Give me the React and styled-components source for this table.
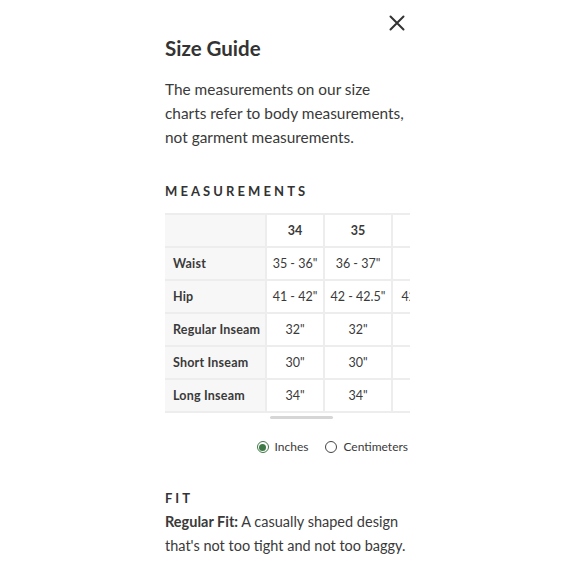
import React from "react";
import styled, { createGlobalStyle } from "styled-components";

const Global = createGlobalStyle`
  html, body { margin: 0; padding: 0; background: #fff; }
  body { font-family: Lato, "Noto Sans", sans-serif; color: #333; }
`;

const Page = styled.div`
  width: 580px;
  height: 580px;
  overflow: hidden;
  padding-left: 165px;
  box-sizing: border-box;
`;

const Panel = styled.div`
  width: 245px;
  display: flex;
  flex-direction: column;
  position: relative;
`;

const Close = styled.button`
  position: absolute;
  top: 15px;
  right: 5px;
  width: 16px;
  height: 16px;
  padding: 0;
  border: 0;
  background: none;
  display: flex;
`;

const Title = styled.h1`
  margin: 36px 0 0;
  font-size: 20.5px;
  line-height: 24px;
  font-weight: 700;
  color: #333;
`;

const Intro = styled.p`
  margin: 17px 0 0;
  width: 265px;
  font-size: 15.4px;
  line-height: 24px;
  color: #3a3a3a;
`;

const Heading = styled.h2`
  margin: ${(p) => p.$mt}px 0 0;
  font-size: 13px;
  line-height: 16px;
  font-weight: 700;
  letter-spacing: ${(p) => p.$ls}px;
  color: #333;
`;

const Scroller = styled.div`
  margin-top: 14px;
  width: 245px;
  overflow: hidden;
  position: relative;
  padding-bottom: 8px;
`;

const Table = styled.table`
  border-collapse: collapse;
  table-layout: fixed;
  width: 311px;
`;

const Cell = styled.td`
  height: 31px;
  padding: 0;
  border: 2px solid #ededed;
  border-left: ${(p) => (p.$first ? "0" : "2px solid #ededed")};
  font-size: 12.5px;
  text-align: ${(p) => (p.$label ? "left" : "center")};
  padding-left: ${(p) => (p.$label ? "8px" : "0")};
  font-weight: ${(p) => (p.$bold ? 700 : 400)};
  letter-spacing: ${(p) => (p.$label ? "0.2px" : "0")};
  background: ${(p) => (p.$label ? "#f7f7f7" : "#fff")};
  color: #3a3a3a;
  white-space: nowrap;
  overflow: hidden;
`;

const Thumb = styled.div`
  position: absolute;
  left: 105px;
  bottom: 2px;
  width: 63px;
  height: 3px;
  border-radius: 2px;
  background: #d6d6d6;
`;

const Units = styled.div`
  display: flex;
  justify-content: flex-end;
  gap: 17px;
  margin-top: 18px;
  padding-right: 2px;
`;

const Option = styled.label`
  display: flex;
  align-items: center;
  gap: 6px;
  font-size: 12px;
  line-height: 16px;
  color: #3a3a3a;
`;

const Radio = styled.span`
  width: 10px;
  height: 10px;
  border-radius: 50%;
  border: 1.5px solid ${(p) => (p.$on ? "#3d7a45" : "#444")};
  display: flex;
  align-items: center;
  justify-content: center;
  &::after {
    content: "";
    width: 7px;
    height: 7px;
    border-radius: 50%;
    background: ${(p) => (p.$on ? "#3d7a45" : "transparent")};
  }
`;

const FitText = styled.p`
  margin: 4px 0 0;
  font-size: 14.5px;
  line-height: 24px;
  color: #3a3a3a;
  b { font-weight: 700; }
`;

const cols = [101, 58, 68, 84];
const rows = [
  ["Waist", "35 - 36\"", "36 - 37\"", "37 - 38\""],
  ["Hip", "41 - 42\"", "42 - 42.5\"", "42.5 - 43.5\""],
  ["Regular Inseam", "32\"", "32\"", "32\""],
  ["Short Inseam", "30\"", "30\"", "30\""],
  ["Long Inseam", "34\"", "34\"", "34\""],
];

export default function App() {
  return (
    <>
      <Global />
      <Page>
        <Panel>
          <Close aria-label="Close">
            <svg width="16" height="16" viewBox="0 0 16 16">
              <path d="M1.5 1.5 L14.5 14.5 M14.5 1.5 L1.5 14.5" stroke="#333" strokeWidth="2" strokeLinecap="round" />
            </svg>
          </Close>
          <Title>Size Guide</Title>
          <Intro>
            The measurements on our size<br />charts refer to body measurements,<br />not garment measurements.
          </Intro>
          <Heading $mt={34} $ls={3.1}>MEASUREMENTS</Heading>
          <Scroller>
            <Table>
              <colgroup>
                {cols.map((w, i) => (
                  <col key={i} style={{ width: w }} />
                ))}
              </colgroup>
              <tbody>
                <tr>
                  <Cell $first $label />
                  <Cell $bold>34</Cell>
                  <Cell $bold>35</Cell>
                  <Cell $bold>36</Cell>
                </tr>
                {rows.map((r) => (
                  <tr key={r[0]}>
                    <Cell $first $label $bold>{r[0]}</Cell>
                    <Cell>{r[1]}</Cell>
                    <Cell>{r[2]}</Cell>
                    <Cell>{r[3]}</Cell>
                  </tr>
                ))}
              </tbody>
            </Table>
            <Thumb />
          </Scroller>
          <Units>
            <Option><Radio $on />Inches</Option>
            <Option><Radio />Centimeters</Option>
          </Units>
          <Heading $mt={35} $ls={3}>FIT</Heading>
          <FitText>
            <b>Regular Fit:</b> A casually shaped design<br />that's not too tight and not too baggy.
          </FitText>
        </Panel>
      </Page>
    </>
  );
}
